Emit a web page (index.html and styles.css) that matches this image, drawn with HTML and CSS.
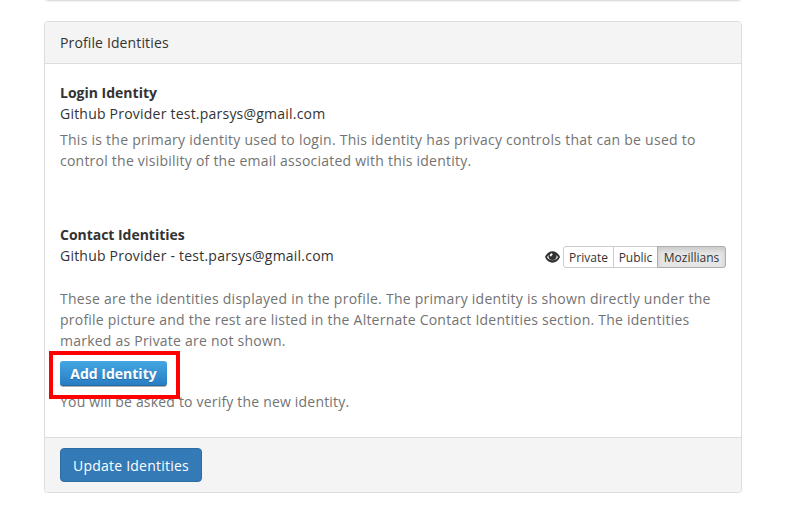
FILE: index.html
```html
<!DOCTYPE html>
<html lang="en">
<head>
<meta charset="utf-8">
<title>Profile Identities</title>
<link rel="stylesheet" href="styles.css">
</head>
<body>
<div class="panel previous"></div>
<section class="panel">
  <header class="panel-heading">Profile Identities</header>
  <div class="panel-body">
    <div class="login">
      <strong>Login Identity</strong>
      <div>Github Provider test.parsys@gmail.com</div>
      <p class="help intro">This is the primary identity used to login. This identity has privacy controls that can be used to control the visibility of the email associated with this identity.</p>
    </div>
    <div class="contact">
      <strong>Contact Identities</strong>
      <div class="identity-row">
        <span>Github Provider - test.parsys@gmail.com</span>
        <div class="privacy">
          <svg class="eye" viewBox="0 0 15 12" width="15" height="12"><path fill="#333" fill-rule="evenodd" d="M0 6C3-1.600 12-1.600 15 6C12 13.600 3 13.600 0 6ZM2 6.200C4.500 10.200 10.500 10.200 13 6.200C12.500 5.200 12 4.500 11.500 4C12 7 10.200 9 7.500 9S3 7 3.500 4C3 4.500 2.500 5.200 2 6.200ZM6.900 2.200C5.500 2.500 4.700 3.500 4.700 4.900L6.400 5.400C6.400 4.700 6.900 4.100 7.800 3.800Z"/></svg>
          <div class="btn-group"><button>Private</button><button>Public</button><button class="active">Mozillians</button></div>
        </div>
      </div>
      <p class="help note">These are the identities displayed in the profile. The primary identity is shown directly under the profile picture and the rest are listed in the Alternate Contact Identities section. The identities marked as Private are not shown.</p>
      <div class="add-wrap"><button class="add">Add Identity</button><span class="highlight"></span></div>
      <p class="help verify">You will be asked to verify the new identity.</p>
    </div>
  </div>
  <footer class="panel-footer"><button class="update">Update Identities</button></footer>
</section>
</body>
</html>
```
FILE: styles.css
```css
* { box-sizing: border-box; }
body {
  margin: 0;
  background: #fff;
  color: #333;
  font: 14px/21px "Open Sans", sans-serif;
  letter-spacing: .22px;
}
button { font-family: inherit; margin: 0; }
strong { display: block; font-weight: 700; letter-spacing: -.03px; }
.panel {
  width: 698px;
  margin: 0 0 0 44px;
  border: 1px solid #ddd;
  border-radius: 4px;
  box-shadow: 0 1px 1px rgba(0, 0, 0, .05);
}
.previous { height: 11px; margin-top: -10px; margin-bottom: 20px; }
.panel-heading {
  height: 42px;
  padding: 10px 15px;
  background: #f4f4f4;
  border-bottom: 1px solid #ddd;
  border-radius: 3px 3px 0 0;
  letter-spacing: .13px;
}
.panel-body { height: 373px; padding: 18px 15px 0; }
.help { margin: 5px 0 0; color: #737373; letter-spacing: .23px; }
.intro::first-line, .note::first-line { letter-spacing: .265px; }
.login { height: 142px; }
.login strong { letter-spacing: 0; }
.identity-row { display: flex; justify-content: space-between; height: 21px; }
.privacy { display: flex; align-items: center; height: 22px; margin-top: 1px; gap: 3px; }
.btn-group { display: flex; }
.btn-group button {
  width: 51px;
  height: 22px;
  padding: 2px 0 0;
  border: 1px solid #ccc;
  background: #fff;
  color: #333;
  font-size: 12px;
  line-height: 18px;
}
.btn-group button + button { width: 45px; margin-left: -1px; }
.btn-group button:first-child { border-radius: 3px 0 0 3px; }
.btn-group button:last-child { border-radius: 0 3px 3px 0; }
.btn-group button.active {
  width: 69px;
  background: #e6e6e6;
  border-color: #adadad;
  box-shadow: inset 0 3px 5px rgba(0, 0, 0, .125);
}
.note { margin-top: 22px; }
.add-wrap { position: relative; width: 107px; margin-top: 10px; height: 25px; }
.add {
  display: block;
  width: 107px;
  height: 25px;
  padding: 0;
  border: 0;
  border-radius: 3px;
  background: linear-gradient(#43a6e2, #287cc2);
  box-shadow: 0 1px 0 rgba(0, 0, 0, .3), inset 0 -1px 0 rgba(0, 0, 0, .15);
  color: #fff;
  font-weight: 700;
  font-size: 14px;
  line-height: 25px;
  text-shadow: 0 1px 0 rgba(0, 0, 0, .25);
}
.highlight { position: absolute; left: -11px; top: -10px; width: 131px; height: 48px; border: 4px solid #f00; }
.verify { margin-top: 5px; letter-spacing: .19px; }
.panel-footer {
  height: 55px;
  padding: 10px 15px;
  background: #f4f4f4;
  border-top: 1px solid #ddd;
  border-radius: 0 0 3px 3px;
}
.update {
  display: block;
  width: 142px;
  height: 34px;
  padding: 0;
  border: 1px solid #2e6da4;
  border-radius: 4px;
  background: #337ab7;
  color: #fff;
  font-size: 14px;
  letter-spacing: .22px;
}
```
